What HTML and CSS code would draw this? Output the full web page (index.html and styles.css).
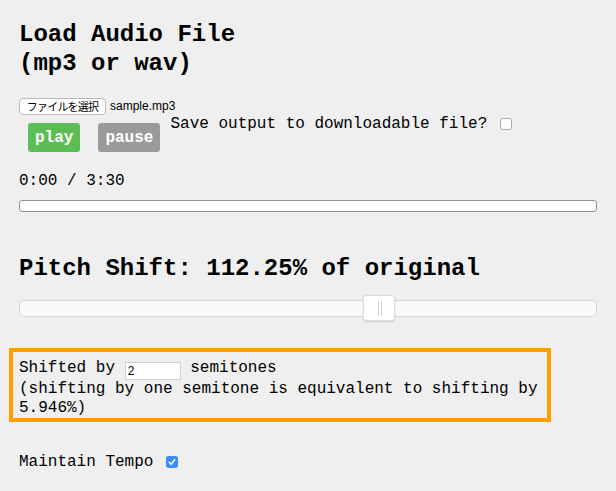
FILE: index.html
```html
<!DOCTYPE html>
<html lang="en">
<head>
<meta charset="utf-8">
<title>Pitch Shifter</title>
<link rel="stylesheet" href="styles.css">
</head>
<body>
<main class="app">
  <h1 class="title">Load Audio File<br>(mp3 or wav)</h1>

  <div class="file-row">
    <button class="file-btn" type="button">ファイルを選択</button>
    <span class="file-name">sample.mp3</span>
  </div>

  <div class="controls">
    <button class="btn btn-play" type="button">play</button>
    <button class="btn btn-pause" type="button">pause</button>
    <label class="save-label">Save output to downloadable file? <input class="check" type="checkbox"></label>
  </div>

  <div class="time">0:00 / 3:30</div>
  <div class="progress"></div>

  <h2 class="pitch">Pitch Shift: 112.25% of original</h2>
  <input class="slider" type="range" min="0" max="100" step="0.01" value="63.05">

  <div class="shift-box">
    Shifted by <input class="semis" type="text" value="2"> semitones<br>
    (shifting by one semitone is equivalent to shifting by 5.946%)
  </div>

  <label class="tempo">Maintain Tempo <input class="check check-on" type="checkbox" checked></label>
</main>
</body>
</html>
```

FILE: styles.css
```css
html, body {
  margin: 0;
  padding: 0;
  background: #efefef;
}

body {
  font-family: "Liberation Mono", "Courier New", monospace;
  font-size: 16px;
  color: #000;
}

.app {
  padding: 0 19px;
}

.title {
  margin: 20px 0 0;
  font-size: 24px;
  font-weight: bold;
  line-height: 29px;
}

.file-row {
  margin-top: 20px;
  height: 16px;
  display: flex;
  align-items: center;
  gap: 4px;
}

.file-btn {
  height: 17px;
  width: 87px;
  padding: 0;
  box-sizing: border-box;
  background: #fff;
  border: 1px solid #b9b9b9;
  border-radius: 4px;
  font-family: "Noto Sans CJK JP", sans-serif;
  font-size: 11px;
  letter-spacing: -0.8px;
  line-height: 15px;
  color: #000;
}

.file-name {
  font-family: "Liberation Sans", Arial, sans-serif;
  font-size: 12px;
  line-height: 16px;
}

.controls {
  display: flex;
  align-items: flex-start;
}

.btn {
  margin-top: 9px;
  height: 29px;
  padding: 0 7px;
  border: none;
  border-radius: 3px;
  color: #fff;
  font-family: "Liberation Mono", "Courier New", monospace;
  font-size: 16px;
  font-weight: bold;
  line-height: 30px;
}

.btn-play {
  margin-left: 9px;
  background: #5cbd55;
}

.btn-pause {
  margin-left: 18px;
  background: #9a9a9a;
}

.save-label {
  margin-top: 1px;
  margin-left: 10px;
  line-height: 18px;
}

.check {
  -webkit-appearance: none;
  appearance: none;
  width: 12px;
  height: 12px;
  margin: 0 0 0 3px;
  vertical-align: -2px;
  box-sizing: border-box;
  background: #fff;
  border: 1px solid #a9a9a9;
  border-radius: 3px;
}

.check-on {
  border: none;
  background: #3b8ef5 url("data:image/svg+xml,%3Csvg xmlns='http://www.w3.org/2000/svg' viewBox='0 0 12 12'%3E%3Cpath d='M3.2 6.3l1.8 1.9 3.8-4.4' fill='none' stroke='%23fff' stroke-width='1.5' stroke-linecap='round' stroke-linejoin='round'/%3E%3C/svg%3E") center/12px 12px no-repeat;
}

.time {
  margin-top: 20px;
  line-height: 18px;
}

.progress {
  margin-top: 10px;
  height: 12px;
  box-sizing: border-box;
  background: #fff;
  border: 1px solid #929292;
  border-radius: 3px;
}

.pitch {
  margin: 42px 0 0;
  font-size: 24px;
  font-weight: bold;
  line-height: 29px;
}

.slider {
  -webkit-appearance: none;
  appearance: none;
  display: block;
  width: 100%;
  height: 26px;
  margin: 12px 0 0;
  padding: 0;
  background: transparent;
}

.slider::-webkit-slider-runnable-track {
  height: 17px;
  box-sizing: border-box;
  background: #f9f9f9;
  border: 1px solid #d6d6d6;
  border-radius: 4px;
}

.slider::-webkit-slider-thumb {
  -webkit-appearance: none;
  appearance: none;
  width: 32px;
  height: 26px;
  margin-top: -5.5px;
  box-sizing: border-box;
  border: 1px solid #dcdcdc;
  border-radius: 3px;
  background:
    linear-gradient(#cfcfcf, #cfcfcf) 14px 6px / 1px 14px no-repeat,
    linear-gradient(#cfcfcf, #cfcfcf) 17px 6px / 1px 14px no-repeat,
    #fff;
  box-shadow: 0 1px 2px rgba(0, 0, 0, 0.15);
}

.shift-box {
  margin: 27px 0 0 -10px;
  width: 542px;
  height: 74px;
  box-sizing: border-box;
  border: 4px solid #ff9f00;
  padding: 7px 6px 3px;
  line-height: 19px;
}

.semis {
  width: 56px;
  height: 18px;
  box-sizing: border-box;
  margin: 0;
  padding: 0 2px;
  border: 1px solid #d0d0d0;
  background: #fff;
  font-family: "Liberation Sans", Arial, sans-serif;
  font-size: 12px;
  vertical-align: -3px;
}

.tempo {
  display: block;
  margin-top: 31px;
  line-height: 18px;
}
```
